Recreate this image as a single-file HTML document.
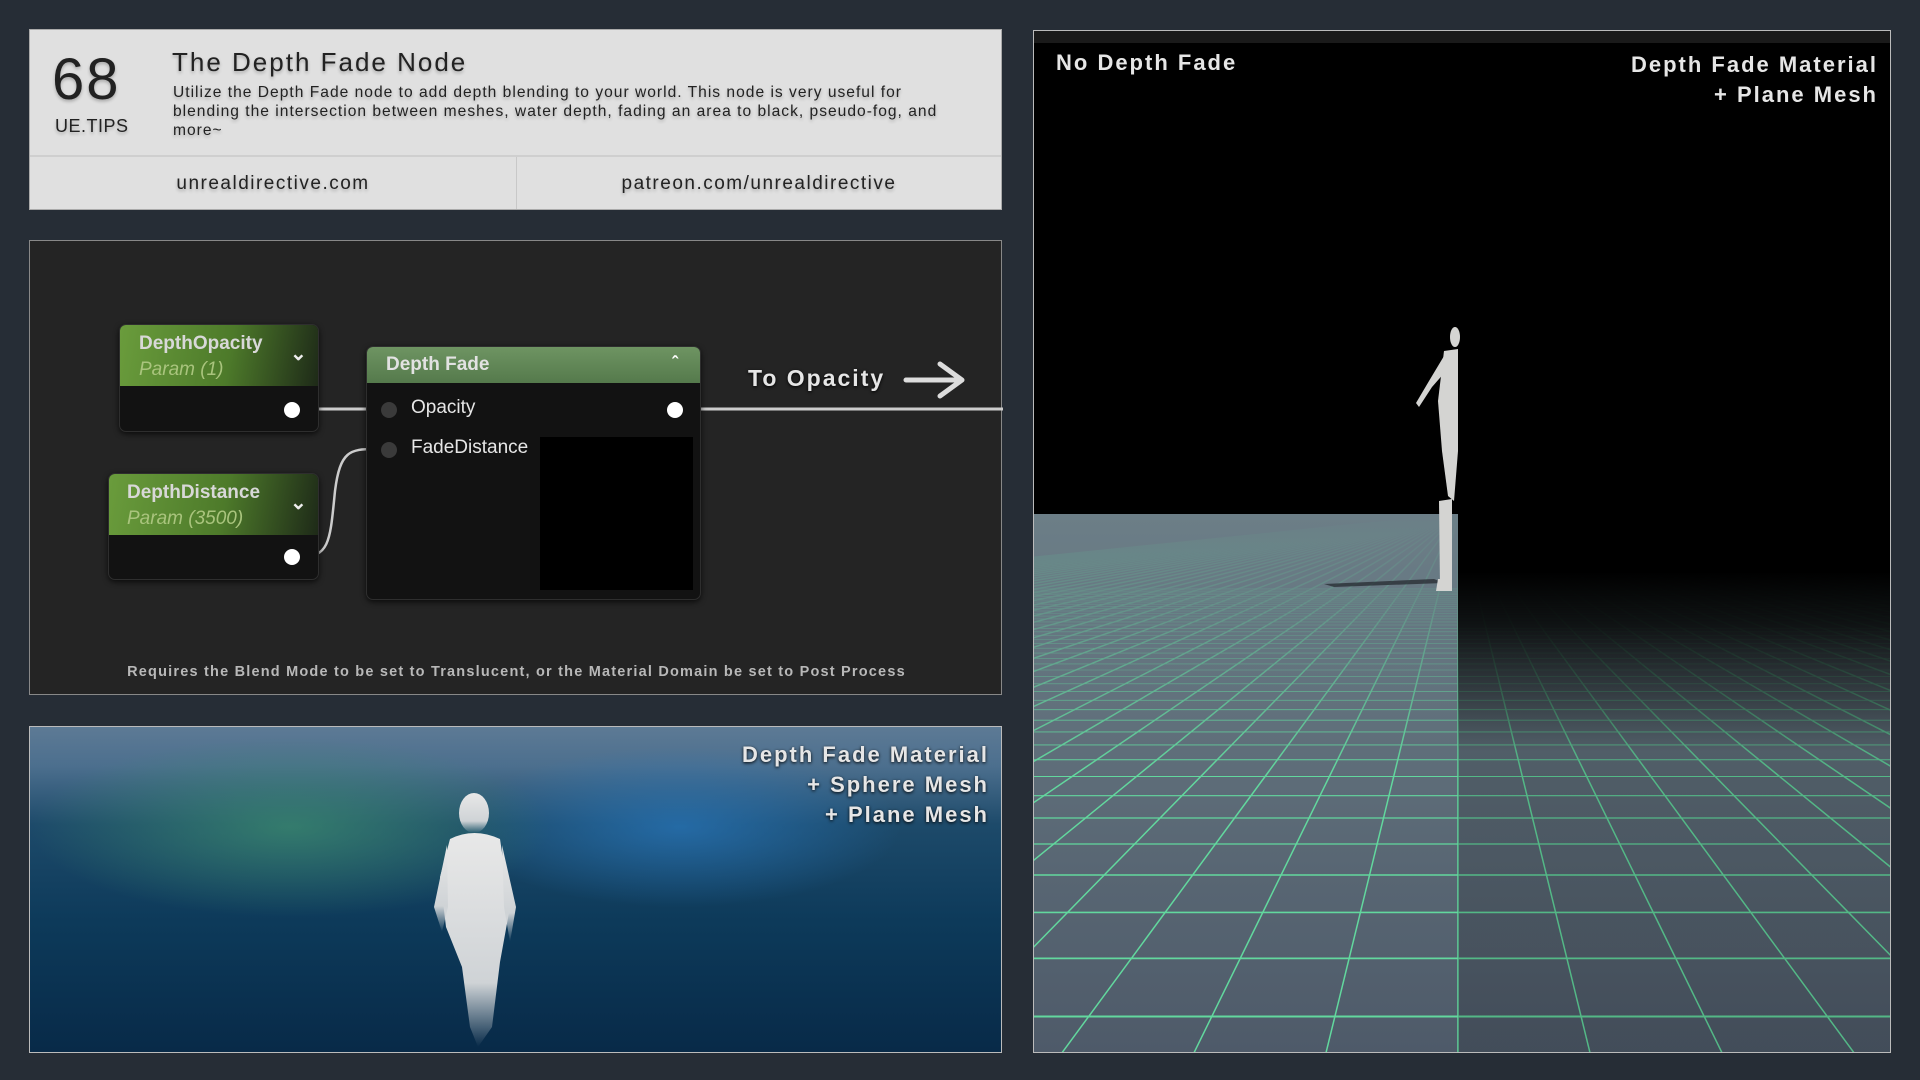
<!DOCTYPE html>
<html><head><meta charset="utf-8"><style>
*{margin:0;padding:0;box-sizing:border-box}
body{width:1920px;height:1080px;background:#262d36;position:relative;overflow:hidden;font-family:"Liberation Sans",sans-serif}
.abs{position:absolute}
#hdr{left:29px;top:29px;width:973px;height:181px;background:#e0e0e0;border:1px solid #aaa}
.t{color:#222;text-shadow:0 2px 3px rgba(0,0,0,.25)}
#nodes{left:29px;top:240px;width:973px;height:455px;background:#242424;border:1px solid #888}
.node{position:absolute;background:#121212;border-radius:7px;box-shadow:0 2px 6px rgba(0,0,0,.7);border:1px solid #2e2e2e}
.nh{position:absolute;left:0;top:0;right:0;border-radius:6px 6px 0 0;background:linear-gradient(100deg,#6a9c3c 0%,#4d7a2a 55%,#1e2a18 100%)}
.nt{font-weight:bold;color:#d8d8d8;font-size:19px}
.np{font-style:italic;color:#a9c47d;font-size:19px}
.pin{position:absolute;width:16px;height:16px;border-radius:50%;background:#fff}
.pin2{position:absolute;width:16px;height:16px;border-radius:50%;background:#3a3a3a}
.lbl{color:#e6e6e6;font-size:19px;font-weight:bold;letter-spacing:1.5px;text-shadow:0 1px 3px #000}
</style></head><body>

<div id="hdr" class="abs">
  <div class="abs t" style="left:22px;top:16px;font-size:58px;letter-spacing:2px">68</div>
  <div class="abs t" style="left:25px;top:86px;font-size:18px;letter-spacing:.5px">UE.TIPS</div>
  <div class="abs t" style="left:142px;top:17px;font-size:26px;letter-spacing:2px">The Depth Fade Node</div>
  <div class="abs t" style="left:143px;top:53px;width:800px;font-size:15.6px;line-height:19px;letter-spacing:1px">Utilize the Depth Fade node to add depth blending to your world. This node is very useful for blending the intersection between meshes, water depth, fading an area to black, pseudo-fog, and more~</div>
  <div class="abs" style="left:0;top:125px;width:971px;height:2px;background:#cfcfcf"></div>
  <div class="abs" style="left:486px;top:127px;width:1px;height:52px;background:#c8c8c8"></div>
  <div class="abs t" style="left:0;top:143px;width:486px;text-align:center;font-size:19px;letter-spacing:1.5px">unrealdirective.com</div>
  <div class="abs t" style="left:486px;top:143px;width:486px;text-align:center;font-size:19px;letter-spacing:1.5px">patreon.com/unrealdirective</div>
</div>

<div id="nodes" class="abs">
  <svg class="abs" style="left:0;top:0" width="973" height="455">
    <path d="M270 168 H345" stroke="#ccc" stroke-width="3" fill="none"/>
    <path d="M270 316 C300 316 300 300 305 250 C310 210 320 208 345 208" stroke="#ccc" stroke-width="2.5" fill="none"/>
    <path d="M660 168 H973" stroke="#ccc" stroke-width="3" fill="none"/>
    <path d="M876 139 H930 M910 123 L932 139 L910 155" stroke="#ddd" stroke-width="5" fill="none" stroke-linecap="round" stroke-linejoin="round"/>
  </svg>
  <div class="node" style="left:89px;top:83px;width:200px;height:108px">
    <div class="nh" style="height:61px"></div>
    <div class="abs nt" style="left:19px;top:8px">DepthOpacity</div>
    <div class="abs np" style="left:19px;top:34px">Param (1)</div>
    <div class="abs" style="left:170px;top:16px;color:#eee;font-size:20px;font-weight:bold">⌄</div>
    <div class="pin" style="left:164px;top:77px"></div>
  </div>
  <div class="node" style="left:78px;top:232px;width:211px;height:107px">
    <div class="nh" style="height:61px"></div>
    <div class="abs nt" style="left:18px;top:8px">DepthDistance</div>
    <div class="abs np" style="left:18px;top:34px">Param (3500)</div>
    <div class="abs" style="left:181px;top:16px;color:#eee;font-size:20px;font-weight:bold">⌄</div>
    <div class="pin" style="left:175px;top:75px"></div>
  </div>
  <div class="node" style="left:336px;top:105px;width:335px;height:254px">
    <div class="nh" style="height:36px;background:linear-gradient(180deg,#6e9462,#557a4c)"></div>
    <div class="abs nt" style="left:19px;top:7px;color:#e2e2e2">Depth Fade</div>
    <div class="abs" style="left:305px;top:6px;color:#fff;font-size:18px;font-weight:bold">ˆ</div>
    <div class="pin2" style="left:14px;top:55px"></div>
    <div class="abs" style="left:44px;top:50px;color:#e6e6e6;font-size:19px">Opacity</div>
    <div class="pin2" style="left:14px;top:95px"></div>
    <div class="abs" style="left:44px;top:90px;color:#e6e6e6;font-size:19px">FadeDistance</div>
    <div class="pin" style="left:300px;top:55px"></div>
    <div class="abs" style="left:173px;top:90px;width:153px;height:153px;background:#000"></div>
  </div>
  <div class="abs lbl" style="left:718px;top:124px;font-size:23px;letter-spacing:2px">To Opacity</div>
  <div class="abs" style="left:0;top:423px;width:973px;text-align:center;color:#b8b8b8;font-size:14.5px;font-weight:bold;letter-spacing:1.2px">Requires the Blend Mode to be set to Translucent, or the Material Domain be set to Post Process</div>
</div>

<div class="abs" style="left:29px;top:726px;width:973px;height:327px;border:1px solid #bbb;overflow:hidden;background:
radial-gradient(ellipse 260px 90px at 260px 100px,rgba(60,140,110,.75),transparent),
radial-gradient(ellipse 220px 80px at 650px 100px,rgba(40,120,190,.7),transparent),
linear-gradient(180deg,#5d7a95 0%,#4c6f8e 12%,#1d4a6a 30%,#0d3a5a 60%,#082a48 100%)">
  <svg class="abs" style="left:0;top:0" width="973" height="327">
    <defs><linearGradient id="fg" x1="0" y1="0" x2="0" y2="1"><stop offset="0" stop-color="#e8e8e8"/><stop offset=".7" stop-color="#cfd3d6"/><stop offset="1" stop-color="#cfd3d6" stop-opacity="0"/></linearGradient></defs>
    <g fill="url(#fg)">
      <ellipse cx="444" cy="86" rx="15" ry="20"/>
      <path d="M420 112 Q444 100 470 112 L480 180 L470 235 L462 300 L448 320 L440 300 L432 240 L416 200 L410 150 Z"/>
      <path d="M417 118 L404 180 L412 205 L418 180 Z"/>
      <path d="M472 118 L486 180 L480 215 L474 180 Z"/>
    </g>
  </svg>
  <div class="abs lbl" style="right:12px;top:13px;text-align:right;font-size:22px;line-height:30px;letter-spacing:2px">Depth Fade Material<br>+ Sphere Mesh<br>+ Plane Mesh</div>
</div>

<div class="abs" style="left:1033px;top:30px;width:858px;height:1023px;border:1px solid #bbb;overflow:hidden;background:#000">
  <div class="abs" style="left:0;top:0;width:858px;height:12px;background:#1a1a1a"></div>
  <svg class="abs" style="left:0;top:0" width="858" height="1023" id="g"></svg>
  <div class="abs lbl" style="left:22px;top:19px;font-size:22px;letter-spacing:2px">No Depth Fade</div>
  <div class="abs lbl" style="right:12px;top:19px;text-align:right;font-size:22px;line-height:30px;letter-spacing:2px">Depth Fade Material<br>+ Plane Mesh</div>
</div>
<script>
(function(){
var s=document.getElementById('g'),W=858,H=1023,vx=424,hy=483,L=[];
L.push('<defs><linearGradient id="gl" gradientUnits="userSpaceOnUse" x1="0" y1="'+hy+'" x2="0" y2="'+H+'"><stop offset="0" stop-color="#6c7e87"/><stop offset="1" stop-color="#4e5a69"/></linearGradient>');
L.push('<linearGradient id="hz" gradientUnits="userSpaceOnUse" x1="0" y1="'+hy+'" x2="0" y2="'+(hy+260)+'"><stop offset="0" stop-color="#6c7e87" stop-opacity="1"/><stop offset=".35" stop-color="#667882" stop-opacity=".75"/><stop offset="1" stop-color="#5d6c78" stop-opacity="0"/></linearGradient>');
L.push('<linearGradient id="rf" gradientUnits="userSpaceOnUse" x1="0" y1="540" x2="0" y2="720"><stop offset="0" stop-color="#000" stop-opacity="1"/><stop offset=".3" stop-color="#000" stop-opacity=".85"/><stop offset="1" stop-color="#000" stop-opacity="0.15"/></linearGradient><clipPath id="c"><rect x="0" y="'+hy+'" width="'+W+'" height="'+(H-hy)+'"/></clipPath></defs>');
L.push('<rect x="0" y="'+hy+'" width="'+W+'" height="'+(H-hy)+'" fill="url(#gl)"/>');
var g='<g clip-path="url(#c)" stroke="#62d89e" fill="none">';
for(var n=-1;n<45;n++){var y=hy+1/(0.00199+0.00026*n);var sw=Math.max(.6,2*(y-hy)/500);g+='<line x1="0" x2="'+W+'" y1="'+y.toFixed(1)+'" y2="'+y.toFixed(1)+'" stroke-width="'+sw.toFixed(2)+'"/>';}
for(var i=-40;i<=40;i++){var xb=vx+i*123*(H+60-hy)/502;g+='<line x1="'+vx+'" y1="'+hy+'" x2="'+xb.toFixed(1)+'" y2="'+(H+60)+'" stroke-width="1.5"/>';}
g+='</g>';L.push(g);
L.push('<rect x="0" y="'+hy+'" width="'+W+'" height="270" fill="url(#hz)"/>');
L.push('<rect x="'+vx+'" y="12" width="'+(W-vx)+'" height="530" fill="#000"/>');
L.push('<rect x="'+vx+'" y="540" width="'+(W-vx)+'" height="'+(H-540)+'" fill="url(#rf)"/>');
L.push('<path d="M290 553 L400 548 L410 552 L300 556Z" fill="#2a3036" opacity=".8"/>');
L.push('<g fill="#d4d4d2"><ellipse cx="421" cy="306" rx="5" ry="10"/><path d="M410 320 L424 318 L424 420 L420 470 L414 465 L408 420 L404 370 Z"/><path d="M410 325 L395 350 L382 372 L385 376 L398 356 L412 340Z"/><path d="M405 470 L418 468 L418 556 L406 556Z"/><path d="M404 548 L418 548 L418 560 L402 560Z"/></g>');
s.innerHTML=L.join('');
})();
</script>
</body></html>
